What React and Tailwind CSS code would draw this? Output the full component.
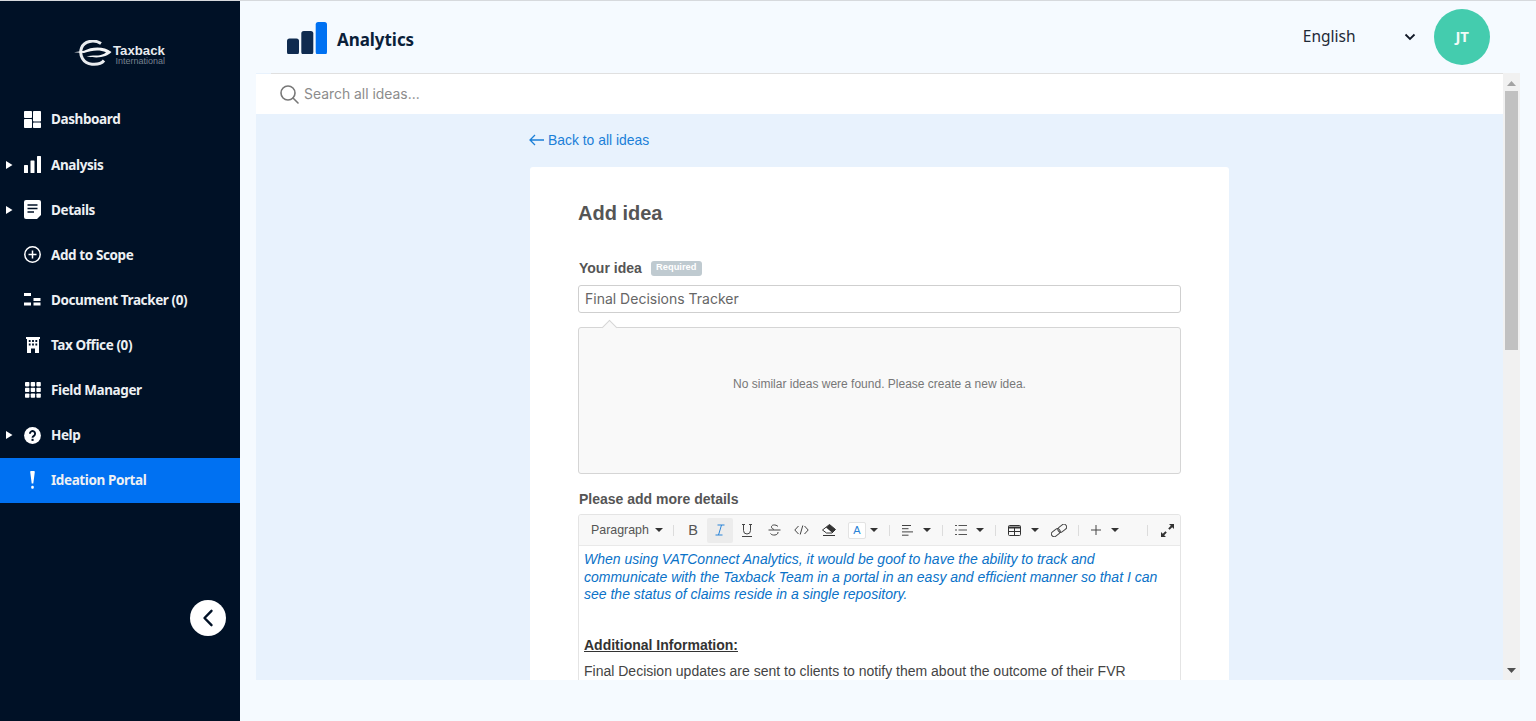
import React from "react";

const fira = "font-['Noto_Sans',sans-serif]";
const Tri = ({ show }) => (
  <span className="w-[23px] flex justify-start pl-[6px]">
    {show && (
      <svg width="6.5" height="8" viewBox="0 0 6.5 8"><path d="M0 0L6.5 4L0 8Z" fill="#fff" /></svg>
    )}
  </span>
);

const icons = {
  dashboard: (
    <svg width="17" height="17" viewBox="0 0 17 17" fill="#fff"><rect x="0" y="0" width="8" height="7" rx=".8" /><rect x="0" y="8" width="8" height="9" rx=".8" /><rect x="9" y="0" width="8" height="10.5" rx=".8" /><rect x="9" y="11.5" width="8" height="5.5" rx=".8" /></svg>
  ),
  analysis: (
    <svg width="17" height="17" viewBox="0 0 17 17" fill="#fff"><rect x="0" y="9" width="4" height="8" rx=".5" /><rect x="6.5" y="4.5" width="4" height="12.5" rx=".5" /><rect x="13" y="0" width="4" height="17" rx=".5" /></svg>
  ),
  details: (
    <svg width="17" height="19" viewBox="0 0 17 19"><path d="M2 0H15a2 2 0 0 1 2 2V15L13 19H2a2 2 0 0 1-2-2V2A2 2 0 0 1 2 0Z" fill="#fff" /><path d="M3.5 5H13.5M3.5 8.5H13.5M3.5 12H10" stroke="#001126" strokeWidth="1.5" /></svg>
  ),
  add: (
    <svg width="17" height="17" viewBox="0 0 17 17" fill="none" stroke="#fff" strokeWidth="1.5"><circle cx="8.5" cy="8.5" r="7.7" /><path d="M8.5 4.5V12.5M4.5 8.5H12.5" /></svg>
  ),
  doc: (
    <svg width="17" height="13" viewBox="0 0 17 13" fill="#fff"><rect x="0" y="0" width="7" height="3" /><rect x="0" y="9.5" width="7" height="3" /><rect x="9.5" y="5" width="7" height="3" /><rect x="9.5" y="9.5" width="7" height="3" /></svg>
  ),
  tax: (
    <svg width="14" height="16" viewBox="0 0 14 16" fill="#fff"><path d="M0 0H14V2H13V16H9V11.5H5V16H1V2H0Z" /><g fill="#001126"><rect x="2.8" y="3" width="1.8" height="2" /><rect x="6.1" y="3" width="1.8" height="2" /><rect x="9.4" y="3" width="1.8" height="2" /><rect x="2.8" y="6.5" width="1.8" height="2" /><rect x="6.1" y="6.5" width="1.8" height="2" /><rect x="9.4" y="6.5" width="1.8" height="2" /></g></svg>
  ),
  field: (
    <svg width="16" height="16" viewBox="0 0 16 16" fill="#fff">{[0, 5.7, 11.4].flatMap((y) => [0, 5.7, 11.4].map((x) => <rect key={`${x}${y}`} x={x} y={y} width="4.4" height="4.4" rx=".8" />))}</svg>
  ),
  help: (
    <svg width="17" height="17" viewBox="0 0 17 17"><circle cx="8.5" cy="8.5" r="8.4" fill="#fff" /><path d="M5.9 6.7a2.6 2.6 0 1 1 4 2.2c-.9.6-1.4 1-1.4 1.9" fill="none" stroke="#001126" strokeWidth="1.9" /><rect x="7.5" y="11.8" width="2.1" height="2.1" fill="#001126" /></svg>
  ),
  idea: (
    <svg width="5" height="18" viewBox="0 0 5 18" fill="#fff"><path d="M.2 1a.9.9 0 0 1 .9-1H3.9a.9.9 0 0 1 .9 1L3.3 12.5H1.7Z" /><rect x="1.2" y="14.8" width="2.6" height="3" rx="1.1" /></svg>
  ),
};

const nav = [
  ["Dashboard", "dashboard", false],
  ["Analysis", "analysis", true],
  ["Details", "details", true],
  ["Add to Scope", "add", false],
  ["Document Tracker (0)", "doc", false],
  ["Tax Office (0)", "tax", false],
  ["Field Manager", "field", false],
  ["Help", "help", true],
  ["Ideation Portal", "idea", false],
];

function Sidebar() {
  return (
    <aside className="w-[240px] shrink-0 bg-[#001126] flex flex-col relative">
      <div className="h-[96px] flex items-start pt-[39px] pl-[74px]">
        <svg width="38" height="26" viewBox="0 0 38 26" fill="none" className="shrink-0">
          <path d="M27 3.5C20 -1 10 1 7.5 8C5 15 9 23.5 18 24.2C24 24.7 28 23 30 20.5" stroke="#e9ecef" strokeWidth="3" />
          <path d="M0 12.3L10 10.8C18 6.5 30 6 37.5 12C33 17 24 18.8 12.5 16.2L19 15.6C25 15.8 30 14.5 32 12.2C26 9.5 18 10 10 13Z" fill="#f4f5f6" />
        </svg>
        <div className="ml-[1px] mt-[4px] flex flex-col font-['Liberation_Sans',sans-serif] text-[#e8ebee]">
          <span className="text-[13.2px] font-bold leading-[13px]">Taxback</span>
          <span className="ml-[2.5px] text-[9px] leading-[9px] text-[#76818f]">International</span>
        </div>
      </div>
      <nav className="flex flex-col">
        {nav.map(([label, ic, arrow]) => {
          const active = label === "Ideation Portal";
          return (
            <div key={label} className={`h-[45.1px] flex items-center ${active ? "bg-[#0071f2]" : ""}`}>
              <Tri show={arrow} />
              <span className="w-[17px] ml-[1px] mr-[10px] flex justify-center shrink-0">{icons[ic]}</span>
              <span className={`${fira} text-[13.5px] font-bold text-[#edf0f3] tracking-[-0.4px]`}>{label}</span>
            </div>
          );
        })}
      </nav>
      <button className="absolute left-[190px] top-[599px] w-[36px] h-[36px] rounded-full bg-white flex items-center justify-center">
        <svg width="12" height="18" viewBox="0 0 12 18" fill="none" stroke="#001126" strokeWidth="2.4" strokeLinecap="round" strokeLinejoin="round"><path d="M9.5 1.8L2.5 9L9.5 16.2" /></svg>
      </button>
    </aside>
  );
}

function Header() {
  return (
    <header className="h-[72px] flex items-center shrink-0 pl-[47px] pr-[46px]">
      <svg width="40" height="32.5" viewBox="0 0 40 32.5" className="shrink-0 mt-[2px]">
        <rect x="0" y="16.5" width="12" height="16" rx="2.5" fill="#0f2b50" />
        <rect x="14.3" y="9" width="12" height="23.5" rx="2.5" fill="#0f2b50" />
        <rect x="28.7" y="0" width="11.3" height="32.5" rx="2.5" fill="#0071f2" />
      </svg>
      <span className={`${fira} ml-[10px] text-[17px] font-bold text-[#0b1f3a] tracking-[-0.05px] mt-[5px]`}>Analytics</span>
      <div className="ml-auto flex items-center">
        <span className={`${fira} text-[15.5px] text-[#1f2937]`}>English</span>
        <svg width="12" height="8" viewBox="0 0 12 8" fill="none" stroke="#111827" strokeWidth="1.8" className="ml-[48px] mr-[18.5px]"><path d="M1.5 1.5L6 6L10.5 1.5" /></svg>
        <div className="w-[56px] h-[56px] rounded-full bg-[#44ccae] flex items-center justify-center">
          <span className={`${fira} text-[15px] font-bold text-[#f0fbf8] tracking-[-0.3px] -translate-y-[1px]`}>JT</span>
        </div>
      </div>
    </header>
  );
}

const Caret = ({ ml }) => <svg width="8" height="4" viewBox="0 0 8 4" className={`shrink-0 ${ml}`}><path d="M0 0H8L4 4Z" fill="#333" /></svg>;
const Sep = ({ ml }) => <span className={`w-px h-[11px] shrink-0 bg-[#dcdcdc] ${ml}`} />;

function Toolbar() {
  return (
    <div className="h-[31px] bg-[#f8f8f8] border-b border-[#e9e9e9] rounded-t-[3px] flex items-center text-[#444]">
      <span className="ml-[12px] w-[58px] shrink-0 whitespace-nowrap text-[12.4px] text-[#555]">Paragraph</span>
      <Caret ml="ml-[6px]" />
      <Sep ml="ml-[10px]" />
      <span className="ml-[12px] w-[14px] text-[14.5px] text-[#555] leading-none text-center">B</span>
      <span className="ml-[7px] w-[26px] h-[25px] shrink-0 bg-[#ececec] rounded-[2px] flex items-center justify-center">
        <svg width="12" height="12" viewBox="0 0 12 12" fill="none" stroke="#2a84d8" strokeWidth="1"><path d="M3.5 1H10.5M1.5 11H8.5M7.5 1L4.5 11" /></svg>
      </span>
      <svg width="12" height="13" viewBox="0 0 12 13" fill="none" stroke="#444" strokeWidth="1" className="ml-[8px] shrink-0"><path d="M2.5 .5V6.5a3.5 3.5 0 0 0 7 0V.5M1 .5H4M8 .5H11M1 12.5H11" /></svg>
      <svg width="13" height="12" viewBox="0 0 13 12" fill="none" stroke="#444" strokeWidth="1" className="ml-[14.5px] shrink-0"><path d="M10 2.5C8 .2 3 .5 3.5 3.2C3.7 4.5 5 5 6 5.5M.5 6H12.5M10 8c.5 3.5-6 4-7.5 1.5" /></svg>
      <svg width="15" height="10" viewBox="0 0 15 10" fill="none" stroke="#444" strokeWidth="1" className="ml-[13px] shrink-0"><path d="M4.5 1L.8 5L4.5 9M10.5 1L14.2 5L10.5 9M8.8 .5L6.2 9.5" /></svg>
      <svg width="14" height="12" viewBox="0 0 14 12" className="ml-[13.5px] shrink-0"><path d="M7.5 .5L13.5 5.5L10 9H4.5L.5 6Z" fill="#fff" stroke="#333" /><path d="M7.5 .5L13.5 5.5L10 8.5L4 3.5Z" fill="#333" /><path d="M1 11.5H13" stroke="#333" /></svg>
      <span className="ml-[12px] w-[18px] h-[17px] shrink-0 bg-white border border-[#e3e3e3] rounded-[2px] flex items-center justify-center text-[11px] text-[#2a84d8] leading-none">A</span>
      <Caret ml="ml-[4px]" />
      <Sep ml="ml-[11px]" />
      <svg width="11" height="11" viewBox="0 0 11 11" fill="none" stroke="#444" strokeWidth="1" className="ml-[12px] shrink-0"><path d="M0 .5H9M0 3.7H6.5M0 6.9H11M0 10.2H6.5" /></svg>
      <Caret ml="ml-[10px]" />
      <Sep ml="ml-[11px]" />
      <svg width="12" height="10" viewBox="0 0 12 10" fill="none" stroke="#555" strokeWidth="1" className="ml-[12px] shrink-0"><path d="M0 .5H2M3.5 .5H12M0 5H2M3.5 5H12M0 9.5H2M3.5 9.5H12" /></svg>
      <Caret ml="ml-[9px]" />
      <Sep ml="ml-[11px]" />
      <svg width="13" height="11" viewBox="0 0 13 11" fill="none" stroke="#333" className="ml-[12px] shrink-0"><rect x=".5" y=".5" width="12" height="10" rx="1" /><path d="M.5 2.5H12.5" strokeWidth="2" /><path d="M.5 6.5H12.5M6.5 3V10.5" /></svg>
      <Caret ml="ml-[10px]" />
      <svg width="16" height="13" viewBox="0 0 16 13" fill="none" stroke="#444" strokeWidth="1" className="ml-[12px] shrink-0"><rect x="0" y="6" width="9.5" height="5.5" rx="2.7" transform="rotate(-38 4.7 8.7)" /><rect x="6.5" y="1.5" width="9.5" height="5.5" rx="2.7" transform="rotate(-38 11.2 4.2)" /></svg>
      <Sep ml="ml-[11px]" />
      <svg width="10" height="10" viewBox="0 0 10 10" fill="none" stroke="#444" strokeWidth="1" className="ml-[12px] shrink-0"><path d="M5 0V10M0 5H10" /></svg>
      <Caret ml="ml-[10px]" />
      <Sep ml="ml-[28px]" />
      <svg width="13" height="13" viewBox="0 0 13 13" className="ml-[13px] shrink-0"><path d="M8 0H13V5L11.2 3.2L8.6 5.8L7.2 4.4L9.8 1.8ZM5 13H0V8L1.8 9.8L4.4 7.2L5.8 8.6L3.2 11.2Z" fill="#333" /></svg>
    </div>
  );
}

function IdeaFrame() {
  return (
    <div className="w-[1264px] h-[607px] flex shrink-0 overflow-hidden font-['Liberation_Sans',sans-serif]">
      <div className="flex-1 bg-[#e8f2fd] flex flex-col overflow-hidden">
        <div className="ml-[15px] h-px bg-[#e0e0e0] shrink-0" />
        <div className="h-[40px] bg-white flex items-center shrink-0 pl-[24px]">
          <svg width="19" height="19" viewBox="0 0 19 19" fill="none" stroke="#777" strokeWidth="1.6"><circle cx="8" cy="8" r="7" /><path d="M13 13L18 18" strokeLinecap="round" /></svg>
          <span className="ml-[5px] text-[13.9px] text-[#8c8c8c] font-['Inter',sans-serif]">Search all ideas...</span>
        </div>
        <div className="pl-[273px] w-[973px]">
          <a className="mt-[17px] flex items-center h-[18px] text-[13.9px] text-[#1b7fd8]">
            <svg width="15" height="12" viewBox="0 0 15 12" fill="none" stroke="#1b7fd8" strokeWidth="1.3"><path d="M15 6H1M6 1L1 6L6 11" /></svg>
            <span className="ml-[4px]">Back to all ideas</span>
          </a>
          <div className="ml-[1px] mt-[18px] w-[699px] bg-white rounded-[3px] pl-[48px] pr-[48px] pt-[35px] h-[600px]">
            <h1 className="text-[20px] leading-[23px] font-bold text-[#555]">Add idea</h1>
            <div className="ml-[1px] mt-[35px] flex items-center h-[16px]">
              <span className="text-[14px] font-bold text-[#555]">Your idea</span>
              <span className="ml-[9px] h-[15px] w-[51px] justify-center rounded-[3px] bg-[#bfcad0] text-[9.3px] font-bold text-white flex items-center">Required</span>
            </div>
            <div className="mt-[9px] h-[28px] border border-[#cfcfcf] rounded-[3px] flex items-center pl-[6px] pb-[2px] text-[14px] text-[#666] font-['Inter',sans-serif]">Final Decisions Tracker</div>
            <div className="relative mt-[14px] h-[147px] bg-[#f9f9f9] border border-[#d5d5d5] rounded-[3px] flex items-center justify-center text-[12px] text-[#777] pb-[33px]">
              <span className="absolute left-[25px] top-[-6px] w-[11px] h-[11px] rotate-45 bg-[#f9f9f9] border-l border-t border-[#d5d5d5]" />
              No similar ideas were found. Please create a new idea.
            </div>
            <div className="ml-[1px] mt-[17px] text-[14px] leading-[16px] font-bold text-[#555]">Please add more details</div>
            <div className="mt-[7px] border border-[#e4e4e4] rounded-[3px]">
              <Toolbar />
              <div className="px-[5px] pt-[5px] text-[14px] leading-[17.6px] h-[400px]">
                <p className="italic text-[#0a72c8]">When using VATConnect Analytics, it would be goof to have the ability to track and communicate with the Taxback Team in a portal in an easy and efficient manner so that I can see the status of claims reside in a single repository.</p>
                <p className="mt-[33px] font-bold underline text-[#333]">Additional Information:</p>
                <p className="mt-[8px] text-[#444] leading-[18px]">Final Decision updates are sent to clients to notify them about the outcome of their FVR</p>
              </div>
            </div>
          </div>
        </div>
      </div>
      <div className="w-[17px] shrink-0 bg-[#f1f1f1] flex flex-col items-center">
        <svg width="9" height="5" viewBox="0 0 9 5" className="mt-[8px]"><path d="M0 5L4.5 0L9 5Z" fill="#a3a3a3" /></svg>
        <div className="w-[13.5px] h-[259px] bg-[#c1c1c1] mt-[5px]" />
        <svg width="9" height="5" viewBox="0 0 9 5" className="mt-auto mb-[7px]"><path d="M0 0L9 0L4.5 5Z" fill="#505050" /></svg>
      </div>
    </div>
  );
}

export default function App() {
  return (
    <div className="w-[1536px] h-[721px] overflow-hidden bg-[#f5faff] border-t border-[#d6d9dd] flex">
      <Sidebar />
      <main className="flex-1 flex flex-col">
        <Header />
        <div className="pl-[16px]">
          <IdeaFrame />
        </div>
      </main>
    </div>
  );
}
